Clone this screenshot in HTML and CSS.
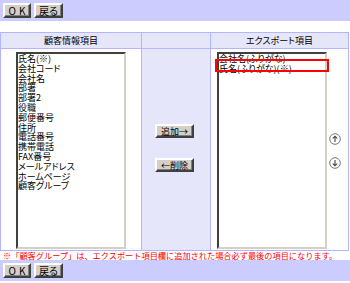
FILE: index.html
```html
<!DOCTYPE html>
<html lang="ja">
<head>
<meta charset="utf-8">
<title>エクスポート項目設定</title>
<link rel="stylesheet" href="styles.css">
</head>
<body>
  <div class="toolbar">
    <button class="btn ok">OK</button>
    <button class="btn">戻る</button>
  </div>

  <table class="picker">
    <tr>
      <th class="col-left">顧客情報項目</th>
      <th class="col-mid"></th>
      <th class="col-right">エクスポート項目</th>
    </tr>
    <tr>
      <td class="col-left">
        <div class="listbox">
          <div>氏名(※)</div>
          <div>会社コード</div>
          <div>会社名</div>
          <div>部署</div>
          <div>部署2</div>
          <div>役職</div>
          <div>郵便番号</div>
          <div>住所</div>
          <div>電話番号</div>
          <div>携帯電話</div>
          <div>FAX番号</div>
          <div>メールアドレス</div>
          <div>ホームページ</div>
          <div>顧客グループ</div>
        </div>
      </td>
      <td class="col-mid">
        <div class="moves">
          <button class="btn small">追加→</button>
          <button class="btn small">←削除</button>
        </div>
      </td>
      <td class="col-right">
        <div class="export">
          <div class="listbox">
            <div>会社名(ふりがな)</div>
            <div>氏名(ふりがな)(※)</div>
          </div>
          <div class="order">
            <svg width="12" height="12" viewBox="0 0 12 12">
              <circle cx="6" cy="6" r="5.3" fill="#fff" stroke="#777"/>
              <path d="M6 9V3.2M3.8 5.4L6 3.2l2.2 2.2" fill="none" stroke="#444" stroke-width="1.1"/>
            </svg>
            <svg width="12" height="12" viewBox="0 0 12 12">
              <circle cx="6" cy="6" r="5.3" fill="#fff" stroke="#777"/>
              <path d="M6 3v5.8M3.8 6.6L6 8.8l2.2-2.2" fill="none" stroke="#444" stroke-width="1.1"/>
            </svg>
          </div>
          <div class="mark"></div>
        </div>
      </td>
    </tr>
  </table>

  <p class="note">※「顧客グループ」は、エクスポート項目欄に追加された場合必ず最後の項目になります。</p>

  <div class="toolbar">
    <button class="btn ok">OK</button>
    <button class="btn">戻る</button>
  </div>
</body>
</html>
```

FILE: styles.css
```css
* {
  margin: 0;
  padding: 0;
  box-sizing: border-box;
}

body {
  margin: 0;
  font-family: "Noto Sans CJK JP", sans-serif;
  font-size: 9px;
  font-feature-settings: "palt";
  color: #000;
  background: #fff;
}

.toolbar {
  display: flex;
  gap: 3px;
  height: 21px;
  padding: 3px 3px 0;
  background: #ccccff;
}

.btn {
  width: 29px;
  height: 15px;
  padding: 0;
  font-family: "Noto Sans CJK JP", sans-serif;
  font-size: 10px;
  font-feature-settings: "palt";
  line-height: 11px;
  color: #000;
  background: #d4d0c8;
  border: 2px solid;
  border-color: #fff #404040 #404040 #fff;
  box-shadow: inset -1px -1px 0 #808080;
}

.btn.ok {
  width: 28px;
  letter-spacing: 3px;
  padding-left: 3px;
}

.btn.small {
  width: 39px;
  height: 14px;
  font-size: 9px;
}

.picker {
  width: 349px;
  margin-top: 11px;
  border-collapse: collapse;
  border: 1px solid #b4b4ff;
}

.picker th {
  height: 16px;
  font-weight: normal;
  background: #e6e6fa;
  border: 1px solid #b4b4ff;
}

.picker td {
  height: 202px;
  border: 1px solid #b4b4ff;
  vertical-align: top;
  padding-top: 3px;
}

.col-left {
  width: 141px;
}

.col-mid {
  width: 69px;
}

td.col-left {
  text-align: center;
}

td.col-mid {
  background: #e6e6fa;
  vertical-align: middle;
}

.listbox {
  width: 110px;
  height: 197px;
  margin: 0 auto;
  text-align: left;
  line-height: 9.8px;
  background: #fff;
  border: 2px solid;
  border-color: #404040 #d4d0c8 #d4d0c8 #404040;
  overflow: hidden;
}

.moves {
  display: flex;
  flex-direction: column;
  align-items: center;
  gap: 20px;
  margin: -6px 0 0 -3px;
}

.export {
  position: relative;
  display: flex;
  align-items: center;
  gap: 2px;
  padding-left: 6px;
}

.export .listbox {
  margin: 0;
}

.order {
  display: flex;
  flex-direction: column;
  gap: 12px;
}

.mark {
  position: absolute;
  left: 4px;
  top: 7px;
  width: 114px;
  height: 13px;
  border: 2px solid #f00;
}

.note {
  height: 9px;
  padding-left: 3px;
  color: #f00;
  font-size: 8.2px;
  font-feature-settings: normal;
  line-height: 9px;
  white-space: nowrap;
}
```
